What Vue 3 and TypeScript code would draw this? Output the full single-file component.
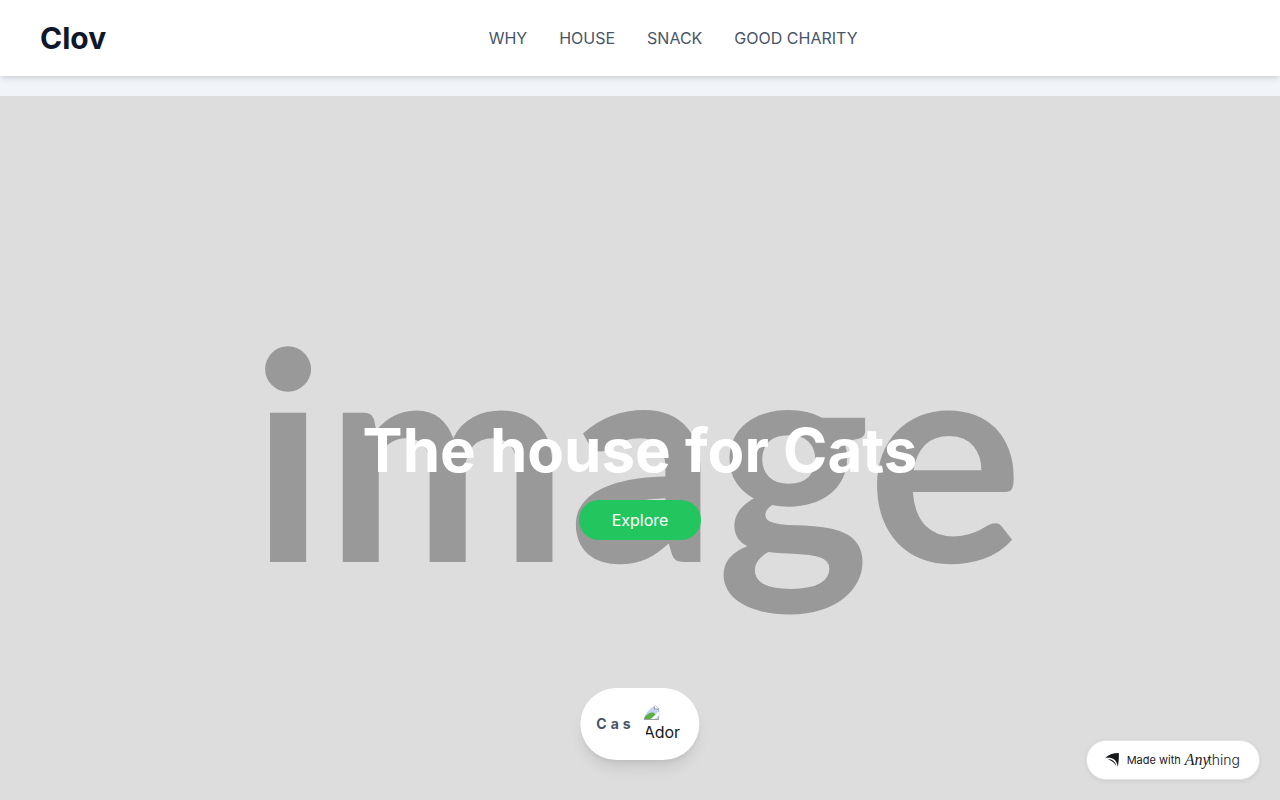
<script setup lang="ts">
interface NavItem {
  label: string
  href: string
}

const navItems: NavItem[] = [
  { label: 'WHY', href: '#why' },
  { label: 'HOUSE', href: '#house' },
  { label: 'SNACK', href: '#snack' },
  { label: 'GOOD CHARITY', href: '#charity' },
]
</script>

<template>
  <div class="page">
    <header class="header">
      <a class="brand" href="#">Clov</a>
      <nav class="nav">
        <a v-for="item in navItems" :key="item.href" :href="item.href">{{ item.label }}</a>
      </nav>
      <span></span>
    </header>

    <main class="hero">
      <div class="placeholder" aria-hidden="true">image</div>
      <div class="hero-content">
        <h1>The house for Cats</h1>
        <button type="button" class="explore">Explore</button>
      </div>
    </main>

    <div class="chip">
      <span class="chip-name">Cas</span>
      <div class="avatar">
        <svg width="16" height="16" viewBox="0 0 16 16" aria-hidden="true">
          <path d="M0 0h11l5 5v11H0z" fill="#c3d4f7" />
          <path d="M0 15.500V14.500C3.500 9.500 7 8 10 8.500L12 10v5.500z" fill="#5cb043" />
          <path d="M.5 15.500h15V5.500" fill="none" stroke="#a0a0a0" />
          <path d="M.5 .5h10.500l4.500 4.500" fill="none" stroke="#a0a0a0" />
          <path d="M11 .5v4.500h4.500" fill="#fff" stroke="#9b9b9b" />
          <path d="M16 7 7.500 15h4l4.500-4z" fill="#fff" />
        </svg>
        <span class="avatar-alt">Ador</span>
      </div>
    </div>

    <a class="badge" href="#made-with">
      <svg width="14" height="14" viewBox="0 0 14 14" aria-hidden="true">
        <path d="M0 5.200C3 1.700 8 .1 13.800 0c.3 5-.1 9.700-1.200 14C12.300 8 8.500 3.600 0 5.200Z" fill="#18191b" />
        <path d="M2.800 6.300C7.300 6 10.400 8.600 11.300 13 9.500 9.900 7 8 2.800 6.300Z" fill="#18191b" />
      </svg>
      <span class="made">Made with</span>
      <span class="wordmark"><em>Any</em><span>thing</span></span>
    </a>
  </div>
</template>

<style>
body {
  margin: 0;
}
</style>

<style scoped>
.page {
  position: relative;
  height: 100vh;
  overflow: hidden;
  background: #f1f5f9;
  font-family: Inter, "Liberation Sans", sans-serif;
  font-size: 16px;
  line-height: 24px;
}

a {
  color: inherit;
  text-decoration: none;
}

.header {
  display: flex;
  align-items: center;
  justify-content: space-between;
  padding: 20px 40px;
  background: #fff;
  box-shadow: 0 4px 6px -1px rgba(0, 0, 0, 0.1), 0 2px 4px -2px rgba(0, 0, 0, 0.1);
}

.brand {
  color: #0f172a;
  font-size: 30px;
  font-weight: 700;
  line-height: 36px;
}

.nav {
  display: flex;
  gap: 32px;
  color: #475569;
}

.hero {
  display: grid;
  place-items: center;
  height: 96vh;
  margin-top: 20px;
  overflow: hidden;
  background: #ddd;
}

.placeholder,
.hero-content {
  grid-area: 1 / 1;
}

.placeholder {
  padding: 0 6px 60px 0;
  color: #999;
  font-family: Lato, "Liberation Sans", sans-serif;
  font-size: 291px;
  font-weight: 700;
  line-height: 352px;
}

.hero-content {
  display: flex;
  flex-direction: column;
  align-items: center;
  gap: 20px;
  z-index: 1;
}

h1 {
  margin: 0;
  color: #fff;
  font-size: 60px;
  font-weight: 700;
  line-height: 60px;
}

.explore {
  padding: 8px 33px;
  border: 0;
  border-radius: 20px;
  background: #22c55e;
  color: #fff;
  font: inherit;
  cursor: pointer;
}

.chip {
  position: absolute;
  bottom: 40px;
  left: 50%;
  display: flex;
  align-items: center;
  gap: 9px;
  padding: 16px;
  border-radius: 36px;
  background: #fff;
  box-shadow: 0 10px 15px -3px rgba(0, 0, 0, 0.1), 0 4px 6px -4px rgba(0, 0, 0, 0.1);
  transform: translateX(-50%);
}

.chip-name {
  color: #475569;
  font-size: 14px;
  font-weight: 700;
  line-height: 20px;
  letter-spacing: 4px;
}

.avatar {
  width: 40px;
  height: 40px;
  overflow: hidden;
  border-radius: 50%;
  color: #18181b;
}

.avatar svg {
  display: block;
}

.avatar-alt {
  display: block;
}

.badge {
  position: absolute;
  right: 20px;
  bottom: 20px;
  display: flex;
  align-items: center;
  padding: 0 19px 0 18px;
  height: 38px;
  border: 1px solid #e4e4e4;
  border-radius: 20px;
  background: #fff;
  color: #18191b;
  box-shadow: 0 1px 4px rgba(0, 0, 0, 0.08);
}

.made {
  margin: 0 4px 0 8px;
  font-size: 11px;
  line-height: 16px;
}

.wordmark {
  display: flex;
  align-items: baseline;
  line-height: 20px;
}

.wordmark em {
  margin-right: -2px;
  font-family: "Liberation Serif", serif;
  font-size: 16px;
}

.wordmark span {
  font-size: 14px;
  font-weight: 300;
}
</style>
